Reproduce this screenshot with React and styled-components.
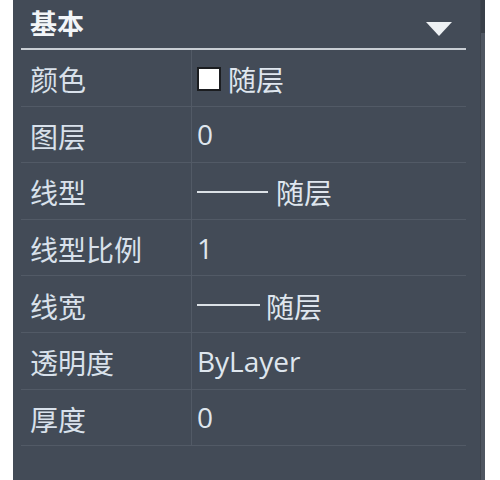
import React from "react";
import styled, { createGlobalStyle } from "styled-components";

const GlobalStyle = createGlobalStyle`
  html, body {
    margin: 0;
    padding: 0;
    background: #ffffff;
  }
`;

const Page = styled.div`
  width: 500px;
  height: 480px;
  display: flex;
  padding-left: 13px;
  box-sizing: border-box;
  font-family: "Noto Sans CJK SC", "Noto Sans", sans-serif;
`;

const Panel = styled.div`
  width: 467px;
  height: 480px;
  background: #434b57;
  padding: 0 14px 0 8px;
  box-sizing: border-box;
`;

const Scrollbar = styled.div`
  width: 5px;
  height: 480px;
  display: flex;
  flex-direction: column;
  background: #4f5661;
  border-left: 1px solid #3e444d;
  box-sizing: border-box;
  .track {
    height: 33px;
    background: #393f48;
  }
`;

const Header = styled.div`
  display: flex;
  align-items: center;
  justify-content: space-between;
  padding: 0 14px 0 9px;
  border-bottom: 2px solid #c9ced4;
  box-sizing: border-box;
  height: 50px;
  h2 {
    margin: 0;
    font-size: 27px;
    font-weight: 700;
    color: #f2f5f8;
    line-height: 1;
    margin-top: -3px;
  }
`;

const Caret = styled.span`
  width: 0;
  height: 0;
  border-left: 13.5px solid transparent;
  border-right: 13.5px solid transparent;
  border-top: 14px solid #eef1f4;
  margin-top: 9px;
`;

const Row = styled.div`
  display: grid;
  grid-template-columns: 170px 1fr;
  height: 56.6px;
  border-bottom: 1px solid #525a66;
  box-sizing: border-box;
`;

const Label = styled.div`
  display: flex;
  align-items: center;
  padding: 3px 0 0 9px;
  font-size: 28px;
  color: #d9e1eb;
`;

const Value = styled.div`
  display: flex;
  align-items: center;
  gap: ${(p) => (p.gap ? p.gap : 0)}px;
  padding: 0 0 0 5px;
  border-left: 1px solid #525a66;
  font-size: 28px;
  color: #dfe6ee;
  font-family: "Open Sans", "Noto Sans CJK SC", sans-serif;
  .cjk {
    font-family: "Noto Sans CJK SC", sans-serif;
    font-size: 28px;
    padding-top: 3px;
  }
`;

const Swatch = styled.span`
  width: 24px;
  height: 24px;
  background: #ffffff;
  border: 2px solid #1b1d20;
  box-sizing: border-box;
  margin-top: 2px;
`;

const Line = styled.span`
  width: ${(p) => p.w}px;
  height: 2px;
  background: #dce1e6;
  margin-top: 2px;
`;

const rows = [
  { label: "颜色", kind: "color", text: "随层" },
  { label: "图层", kind: "text", text: "0" },
  { label: "线型", kind: "line", w: 71, gap: 8, text: "随层" },
  { label: "线型比例", kind: "text", text: "1" },
  { label: "线宽", kind: "line", w: 63, gap: 6, text: "随层" },
  { label: "透明度", kind: "text", text: "ByLayer" },
  { label: "厚度", kind: "text", text: "0" },
];

const App = () => {
  return (
    <>
      <GlobalStyle />
      <Page>
        <Panel>
          <Header>
            <h2>基本</h2>
            <Caret />
          </Header>
          {rows.map((r) => (
            <Row key={r.label}>
              <Label>{r.label}</Label>
              {r.kind === "color" && (
                <Value gap={7}>
                  <Swatch />
                  <span className="cjk">{r.text}</span>
                </Value>
              )}
              {r.kind === "line" && (
                <Value gap={r.gap}>
                  <Line w={r.w} />
                  <span className="cjk">{r.text}</span>
                </Value>
              )}
              {r.kind === "text" && <Value>{r.text}</Value>}
            </Row>
          ))}
        </Panel>
        <Scrollbar>
          <div className="track" />
        </Scrollbar>
      </Page>
    </>
  );
};

export default App;
